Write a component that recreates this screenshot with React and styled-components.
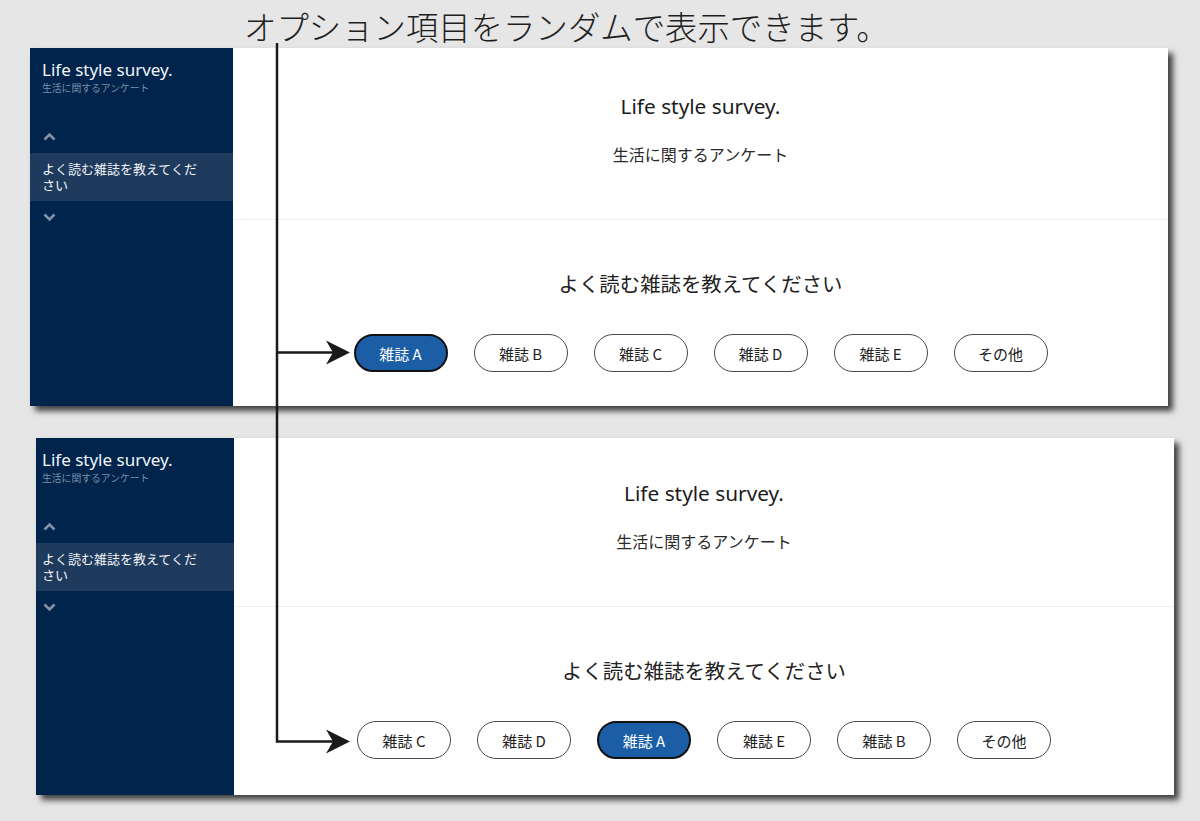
import React from 'react';
import styled, { createGlobalStyle } from 'styled-components';

const GlobalStyle = createGlobalStyle`
  html, body {
    margin: 0;
    padding: 0;
    background: #e6e6e6;
  }
  body {
    font-family: 'Noto Sans', 'Noto Sans CJK JP', sans-serif;
    color: #222;
  }
`;

const Page = styled.div`
  position: relative;
  width: 1200px;
  height: 821px;
  overflow: hidden;
`;

const Caption = styled.div`
  height: 48px;
  padding-left: 244px;
  font-family: 'Noto Sans CJK JP', sans-serif;
  font-weight: 300;
  font-size: 32.4px;
  line-height: 52px;
  color: #1e1e1e;
  white-space: nowrap;
`;

const Panel = styled.section`
  display: flex;
  width: 1138px;
  margin-left: ${(props) => props.offset}px;
  margin-top: ${(props) => props.top}px;
  background: #fff;
  box-shadow: 5px 5px 6px rgba(0, 0, 0, 0.72);
`;

const Sidebar = styled.aside`
  width: ${(props) => props.width}px;
  flex-shrink: 0;
  background: #00244b;
  padding-top: 11px;
  display: flex;
  flex-direction: column;
`;

const SideTitle = styled.div`
  padding: 0 ${(props) => props.pad}px;
  font-family: 'Noto Sans', sans-serif;
  font-size: 17px;
  line-height: 21px;
  color: #f2f4f8;
`;

const SideSub = styled.div`
  padding: 0 ${(props) => props.pad}px;
  margin-top: 1px;
  font-family: 'Noto Sans CJK JP', sans-serif;
  font-size: 9.8px;
  line-height: 14px;
  color: #7d8ea8;
`;

const Chevron = styled.div`
  height: 14px;
  padding: 0 ${(props) => props.pad + 1}px;
  margin-top: ${(props) => props.gap}px;
  display: flex;
  align-items: center;
`;

const SideItem = styled.div`
  margin-top: 10px;
  background: #1e3a5c;
  padding: 8px ${(props) => props.pad}px;
  height: 48px;
  box-sizing: border-box;
`;

const SideItemText = styled.div`
  max-width: 160px;
  font-family: 'Noto Sans CJK JP', sans-serif;
  font-size: 13px;
  line-height: 16px;
  color: #f4f6fa;
`;

const Main = styled.div`
  flex: 1;
  display: flex;
  flex-direction: column;
`;

const Header = styled.header`
  height: ${(props) => props.height}px;
  padding-top: ${(props) => props.height - 127}px;
  box-sizing: border-box;
  border-bottom: 1px solid #efefef;
  display: flex;
  flex-direction: column;
  align-items: center;
`;

const Title = styled.h1`
  margin: 0;
  font-family: 'Noto Sans', sans-serif;
  font-weight: 400;
  font-size: 20.8px;
  line-height: 26px;
  color: #1c1c1c;
`;

const Subtitle = styled.p`
  margin: 24px 0 0;
  font-family: 'Noto Sans CJK JP', sans-serif;
  font-size: 16px;
  line-height: 22px;
  color: #2a2a2a;
`;

const Question = styled.div`
  height: ${(props) => props.height}px;
  padding-top: 49px;
  box-sizing: border-box;
  display: flex;
  flex-direction: column;
  align-items: center;
`;

const QuestionText = styled.h2`
  margin: 0;
  font-family: 'Noto Sans CJK JP', sans-serif;
  font-weight: 400;
  font-size: 20.4px;
  line-height: 28px;
  color: #222;
`;

const Options = styled.div`
  margin-top: 37px;
  display: flex;
  gap: 26px;
`;

const Option = styled.button`
  width: 94px;
  height: 38px;
  box-sizing: border-box;
  border-radius: 19px;
  border: ${(props) => (props.selected ? '2px solid #111' : '1px solid #4a4a4a')};
  background: ${(props) => (props.selected ? '#1b5ea6' : '#fff')};
  color: ${(props) => (props.selected ? '#fff' : '#222')};
  font-family: 'Noto Sans CJK JP', sans-serif;
  font-size: 15px;
  padding: 0;
  display: flex;
  align-items: center;
  justify-content: center;
`;

const Overlay = styled.svg`
  position: absolute;
  left: 0;
  top: 0;
  pointer-events: none;
`;

const ChevronIcon = ({ up }) => (
  <svg width="13" height="9" viewBox="0 0 13 9">
    <polyline
      points={up ? '1.5,7.5 6.5,2.5 11.5,7.5' : '1.5,1.5 6.5,6.5 11.5,1.5'}
      fill="none"
      stroke="#8492a8"
      strokeWidth="2.6"
    />
  </svg>
);

const SurveyPanel = ({ offset, top, sidebarWidth, pad, headerHeight, questionHeight, options }) => (
  <Panel offset={offset} top={top}>
    <Sidebar width={sidebarWidth}>
      <SideTitle pad={pad}>Life style survey.</SideTitle>
      <SideSub pad={pad}>生活に関するアンケート</SideSub>
      <Chevron pad={pad} gap={34}>
        <ChevronIcon up />
      </Chevron>
      <SideItem pad={pad}>
        <SideItemText>よく読む雑誌を教えてください</SideItemText>
      </SideItem>
      <Chevron pad={pad} gap={9}>
        <ChevronIcon />
      </Chevron>
    </Sidebar>
    <Main>
      <Header height={headerHeight}>
        <Title>Life style survey.</Title>
        <Subtitle>生活に関するアンケート</Subtitle>
      </Header>
      <Question height={questionHeight}>
        <QuestionText>よく読む雑誌を教えてください</QuestionText>
        <Options>
          {options.map((o) => (
            <Option key={o} selected={o === '雑誌 A'}>
              {o}
            </Option>
          ))}
        </Options>
      </Question>
    </Main>
  </Panel>
);

const Arrowhead = ({ x, y }) => (
  <path d={`M${x},${y} L${x - 24},${y - 12} L${x - 17},${y} L${x - 24},${y + 12} Z`} fill="#1a1a1a" />
);

export default function App() {
  return (
    <Page>
      <GlobalStyle />
      <Caption>オプション項目をランダムで表示できます。</Caption>
      <SurveyPanel
        offset={30}
        top={0}
        sidebarWidth={203}
        pad={12}
        headerHeight={172}
        questionHeight={186}
        options={['雑誌 A', '雑誌 B', '雑誌 C', '雑誌 D', '雑誌 E', 'その他']}
      />
      <SurveyPanel
        offset={36}
        top={32}
        sidebarWidth={198}
        pad={6}
        headerHeight={169}
        questionHeight={188}
        options={['雑誌 C', '雑誌 D', '雑誌 A', '雑誌 E', '雑誌 B', 'その他']}
      />
      <Overlay width="1200" height="821">
        <path
          d="M277,43 L277,741.5 L335,741.5 M277,352.5 L335,352.5"
          fill="none"
          stroke="#1a1a1a"
          strokeWidth="2.5"
        />
        <Arrowhead x={350} y={352.5} />
        <Arrowhead x={350} y={741.5} />
      </Overlay>
    </Page>
  );
}
